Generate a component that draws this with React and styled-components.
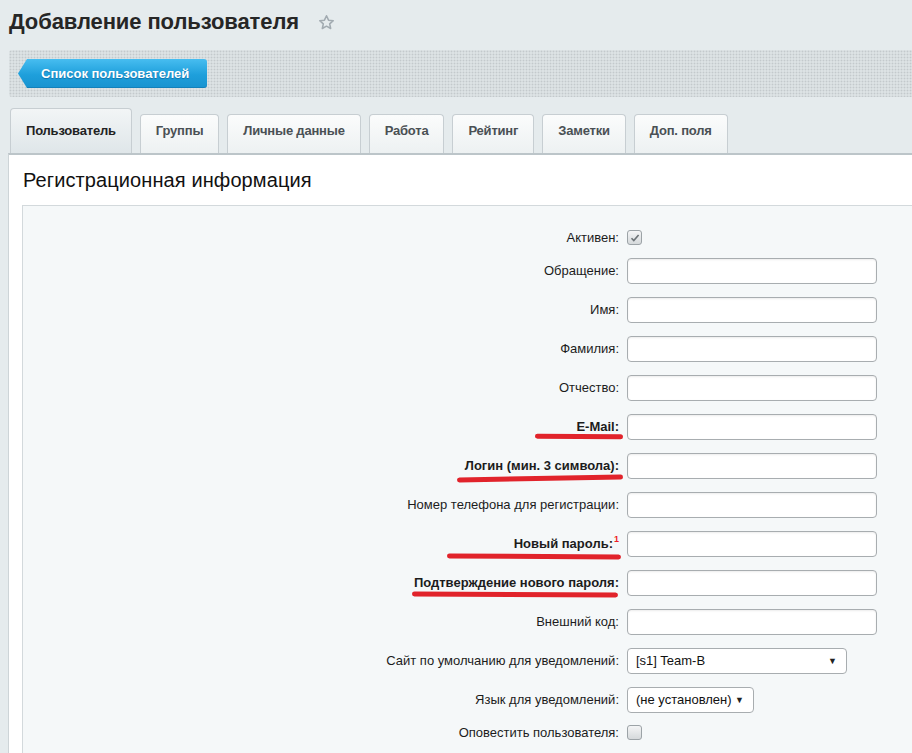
import React from "react";
import styled, { createGlobalStyle } from "styled-components";

const GlobalStyle = createGlobalStyle`
  body {
    margin: 0;
    background: #e5ebed;
    font-family: "Liberation Sans", Arial, sans-serif;
  }
`;

const fields = [
  { label: "Активен:", type: "check", checked: true },
  { label: "Обращение:", type: "input" },
  { label: "Имя:", type: "input" },
  { label: "Фамилия:", type: "input" },
  { label: "Отчество:", type: "input" },
  { label: "E-Mail:", type: "input", bold: true, mark: { r: -4, w: 88, dy: 10, tilt: 0.5 } },
  { label: "Логин (мин. 3 символа):", type: "input", bold: true, mark: { r: -4, w: 166, dy: 13, tilt: -1 } },
  { label: "Номер телефона для регистрации:", type: "input" },
  { label: "Новый пароль:", type: "input", bold: true, sup: "1", mark: { r: -2, w: 174, dy: 13, tilt: 0.3 } },
  { label: "Подтверждение нового пароля:", type: "input", bold: true, mark: { r: 1, w: 206, dy: 12, tilt: 0.3 } },
  { label: "Внешний код:", type: "input" },
  { label: "Сайт по умолчанию для уведомлений:", type: "select", value: "[s1] Team-B", width: 220 },
  { label: "Язык для уведомлений:", type: "select", value: "(не установлен)", width: 127 },
  { label: "Оповестить пользователя:", type: "check" },
];

const tabs = ["Пользователь", "Группы", "Личные данные", "Работа", "Рейтинг", "Заметки", "Доп. поля"];

function Star() {
  return (
    <svg width="17" height="17" viewBox="0 0 24 24" fill="none" stroke="#a2abb1" strokeWidth="2.2" strokeLinejoin="round">
      <path d="M12 2.5l2.9 6.2 6.6.7-5 4.5 1.4 6.6L12 17.2l-5.9 3.3 1.4-6.6-5-4.5 6.6-.7z" />
    </svg>
  );
}

function Control({ field }) {
  if (field.type === "check") {
    return (
      <CheckBox>
        {field.checked && (
          <svg width="10" height="10" viewBox="0 0 10 10">
            <path d="M1.5 5.2l2.3 2.3L8.6 2" fill="none" stroke="#6b7276" strokeWidth="1.6" />
          </svg>
        )}
      </CheckBox>
    );
  }
  if (field.type === "select") {
    return (
      <Select $w={field.width}>
        <span>{field.value}</span>
        <Arrow>▼</Arrow>
      </Select>
    );
  }
  return <Input />;
}

export default function App() {
  return (
    <>
      <GlobalStyle />
      <Page>
        <TitleRow>
          <Title>Добавление пользователя</Title>
          <Star />
        </TitleRow>
        <Toolbar>
          <BackButton>Список пользователей</BackButton>
        </Toolbar>
        <TabBar>
          {tabs.map((t, i) => (
            <Tab key={t} $active={i === 0}>
              {t}
            </Tab>
          ))}
        </TabBar>
        <Panel>
          <Heading>Регистрационная информация</Heading>
          <FormBox>
            {fields.map((f) => (
              <Row key={f.label} $h={f.type === "check" ? 27 : 39}>
                <Label $bold={f.bold}>
                  {f.label}
                  {f.sup && <Sup>{f.sup}</Sup>}
                  {f.mark && <Mark $r={f.mark.r} $w={f.mark.w} $dy={f.mark.dy} $tilt={f.mark.tilt} />}
                </Label>
                <Cell>
                  <Control field={f} />
                </Cell>
              </Row>
            ))}
          </FormBox>
        </Panel>
      </Page>
    </>
  );
}

const Page = styled.div`
  padding-left: 9px;
  height: 753px;
  overflow: hidden;
`;

const TitleRow = styled.div`
  display: flex;
  align-items: center;
  gap: 19px;
  height: 44px;
`;

const Title = styled.h1`
  margin: 0;
  font-size: 22px;
  font-weight: bold;
  color: #262626;
  letter-spacing: -0.1px;
`;

const Toolbar = styled.div`
  margin-top: 6px;
  height: 47px;
  padding-left: 9px;
  display: flex;
  align-items: center;
  border-radius: 3px 0 0 3px;
  background-color: #dce2e4;
  background-image: radial-gradient(circle, #c3c9cc 0.8px, transparent 1.1px);
  background-size: 3px 3px;
`;

const BackButton = styled.button`
  height: 29px;
  padding: 0 18px 0 23px;
  border: none;
  border-radius: 3px;
  background: linear-gradient(#47bdf0, #1e9fdb 55%, #1893d0);
  color: #fff;
  font-family: "Liberation Sans", Arial, sans-serif;
  font-size: 13px;
  font-weight: bold;
  text-shadow: 0 1px 1px rgba(0, 60, 110, 0.45);
  box-shadow: inset 0 -1px 0 rgba(0, 70, 120, 0.25);
  clip-path: polygon(9px 0, 100% 0, 100% 100%, 9px 100%, 0 50%);
`;

const TabBar = styled.div`
  margin-top: 11px;
  display: flex;
  align-items: flex-end;
  gap: 8px;
  padding-left: 1px;
`;

const Tab = styled.div`
  box-sizing: border-box;
  height: ${(p) => (p.$active ? 45 : 39)}px;
  padding: ${(p) => (p.$active ? 14 : 8)}px 15px 0;
  border: 1px solid #c7ced2;
  border-bottom: none;
  border-radius: 4px 4px 0 0;
  background: ${(p) =>
    p.$active ? "linear-gradient(#f2f5f6, #dfe6e9)" : "linear-gradient(#fbfcfc, #edf1f2)"};
  font-size: 13px;
  font-weight: bold;
  line-height: 15px;
  letter-spacing: -0.2px;
  color: ${(p) => (p.$active ? "#222" : "#4a5054")};
`;

const Panel = styled.div`
  background: #fff;
  border-top: 2px solid #bcc5c9;
  border-left: 1px solid #cdd4d7;
  margin-left: -1px;
  height: 600px;
`;

const Heading = styled.h2`
  margin: 0;
  height: 50px;
  padding-left: 14px;
  display: flex;
  align-items: center;
  font-size: 20px;
  font-weight: normal;
  letter-spacing: 0.1px;
  color: #111;
`;

const FormBox = styled.div`
  margin-left: 13px;
  padding-top: 18px;
  height: 100%;
  background: #f5f8f9;
  border-top: 1px solid #d3d9dc;
  border-left: 1px solid #d3d9dc;
`;

const Row = styled.div`
  display: grid;
  grid-template-columns: 596px 1fr;
  column-gap: 8px;
  align-items: center;
  height: ${(p) => p.$h}px;
`;

const Label = styled.div`
  position: relative;
  text-align: right;
  font-size: 13px;
  line-height: 16px;
  font-weight: ${(p) => (p.$bold ? "bold" : "normal")};
  color: #1c1c1c;
`;

const Sup = styled.sup`
  margin-left: 1px;
  font-size: 9px;
  line-height: 0;
  vertical-align: 6px;
  font-weight: bold;
  color: #ee1c25;
`;

const Mark = styled.span`
  position: absolute;
  right: ${(p) => p.$r}px;
  width: ${(p) => p.$w}px;
  top: calc(50% + ${(p) => p.$dy}px);
  height: 5px;
  margin-top: -2.5px;
  border-radius: 3px;
  background: #e1232b;
  transform: rotate(${(p) => p.$tilt}deg);
`;

const Cell = styled.div`
  display: flex;
  align-items: center;
`;

const Input = styled.div`
  box-sizing: border-box;
  width: 250px;
  height: 26px;
  background: #fff;
  border: 1px solid #a8adb0;
  border-radius: 4px;
  box-shadow: inset 0 1px 2px rgba(0, 0, 0, 0.08);
`;

const Select = styled.div`
  box-sizing: border-box;
  width: ${(p) => p.$w}px;
  height: 26px;
  padding: 0 9px 0 8px;
  display: flex;
  align-items: center;
  justify-content: space-between;
  background: #fff;
  border: 1px solid #a8adb0;
  border-radius: 4px;
  font-size: 13px;
  color: #111;
`;

const Arrow = styled.span`
  font-size: 9px;
  color: #222;
`;

const CheckBox = styled.div`
  box-sizing: border-box;
  width: 15px;
  height: 15px;
  display: flex;
  align-items: center;
  justify-content: center;
  border: 1px solid #9ca3a7;
  border-radius: 3px;
  background: linear-gradient(#f4f5f6, #d5d9db);
`;
